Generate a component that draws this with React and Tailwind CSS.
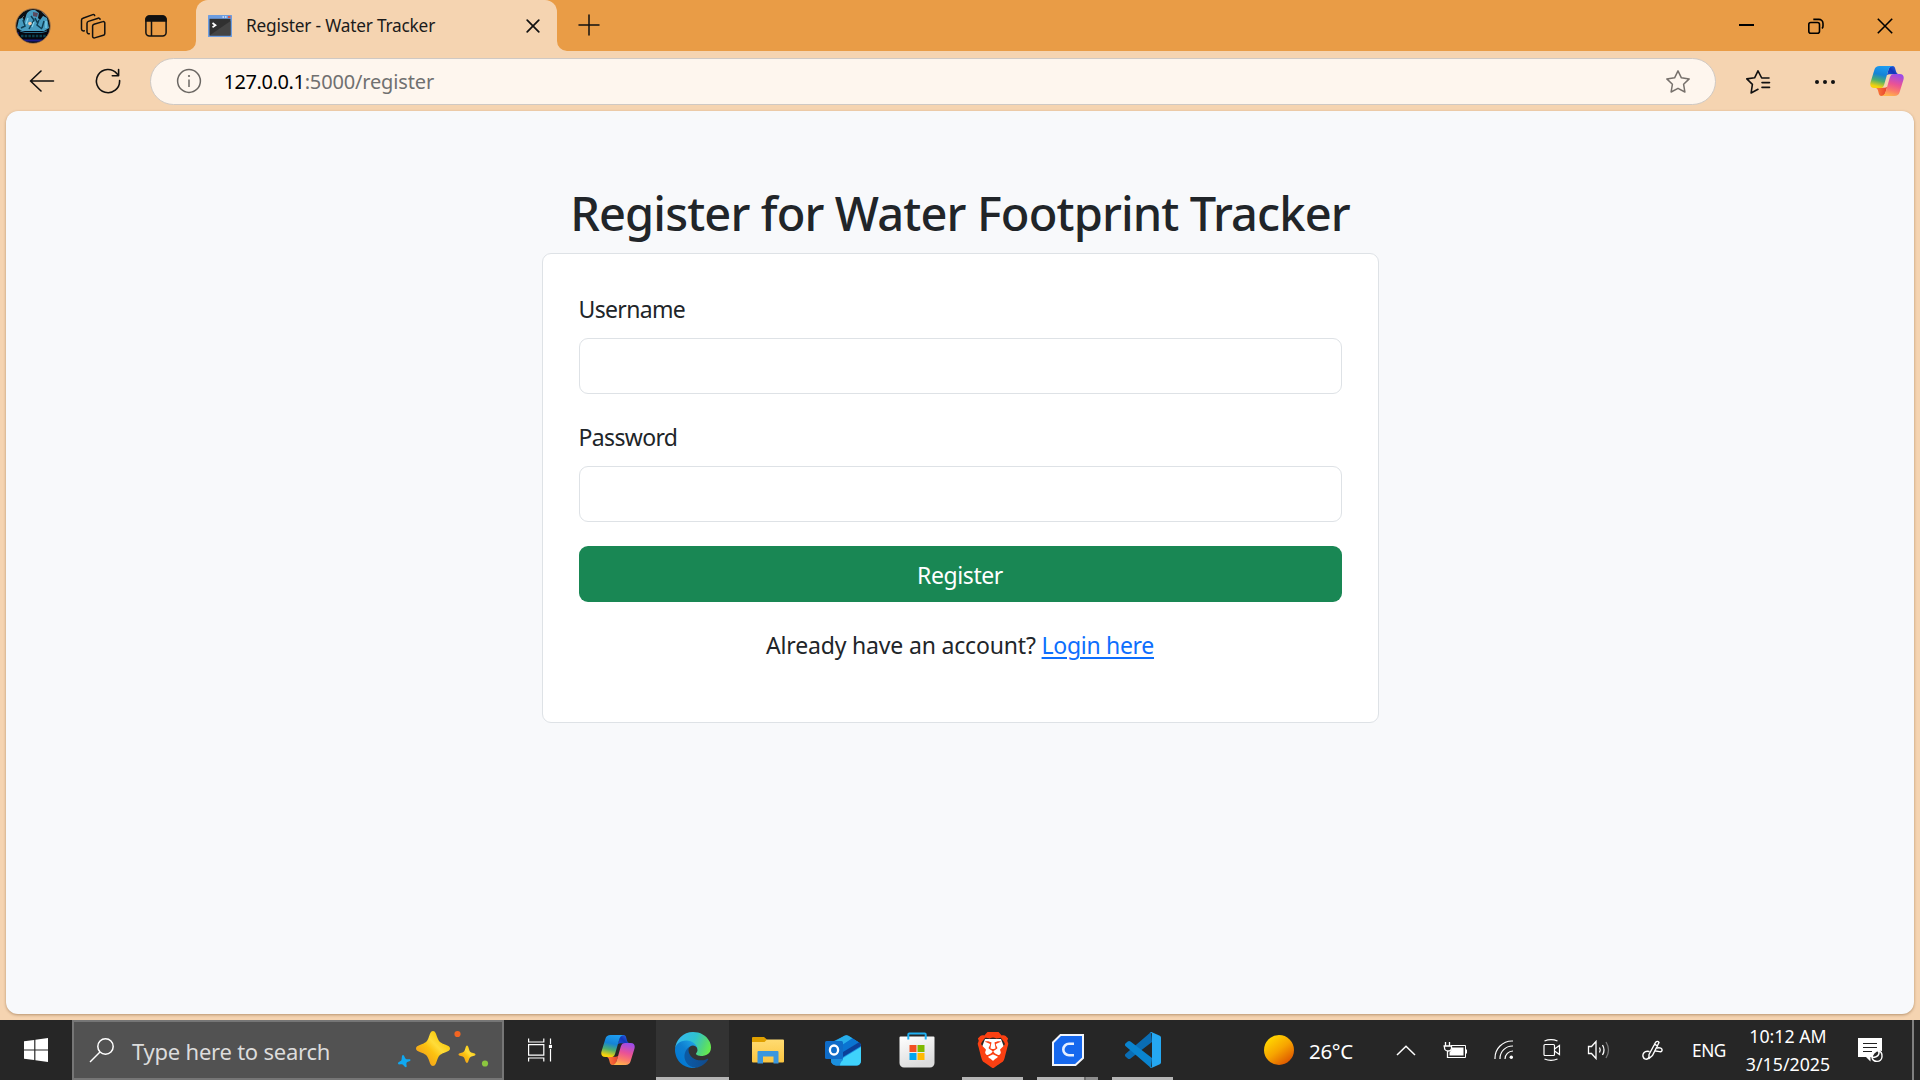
import React from "react";
import { SiBrave } from "react-icons/si";

function Copilot({ id, className }) {
  const ribbon =
    "M9.5 0H23.5C20.5 .2 19 1.8 18.2 4.6L14.2 18.4C13.4 21 12.2 22 9.8 22H4.2C1 22-.3 19.6.5 16.5L4.4 3.8C5.2 1.2 6.8 0 9.5 0Z";
  const fold = "M16.8 9.2L18.2 4.6C19 1.8 20 0 22.4 0C24.6 0 25 1.6 25.6 4C26.2 6.8 27.2 8.2 29.6 8.2H20.4C18.6 8.2 17.6 8.4 16.8 9.2Z";
  return (
    <svg width="34" height="30" viewBox="0 0 34 30" className={className}>
      <defs>
        <linearGradient id={id + "a"} x1="0.6" y1="0" x2="0.35" y2="1">
          <stop offset="0" stopColor="#1e9df1" />
          <stop offset="0.4" stopColor="#1583d6" />
          <stop offset="0.68" stopColor="#4fae6c" />
          <stop offset="0.95" stopColor="#f6d20c" />
        </linearGradient>
        <linearGradient id={id + "b"} x1="0.7" y1="0" x2="0.4" y2="1">
          <stop offset="0" stopColor="#9a4bea" />
          <stop offset="0.45" stopColor="#ea5296" />
          <stop offset="0.75" stopColor="#fb7c69" />
          <stop offset="1" stopColor="#ffb44c" />
        </linearGradient>
        <linearGradient id={id + "c"} x1="0" y1="1" x2="1" y2="0.3">
          <stop offset="0" stopColor="#1a50d8" />
          <stop offset="0.5" stopColor="#1236b8" />
          <stop offset="1" stopColor="#2c6bec" />
        </linearGradient>
        <linearGradient id={id + "d"} x1="0" y1="0" x2="1" y2="0">
          <stop offset="0" stopColor="#ff8a3c" />
          <stop offset="1" stopColor="#e8402f" />
        </linearGradient>
      </defs>
      <path d={fold} fill={`url(#${id}c)`} />
      <path d="M17.2 20.8L15.8 25.4C15 28.2 14 30 11.6 30C9.4 30 9 28.4 8.4 26C7.8 23.2 6.8 21.8 4.4 21.8H13.6C15.4 21.8 16.4 21.6 17.2 20.8Z" fill={`url(#${id}d)`} />
      <path d={ribbon} fill={`url(#${id}a)`} />
      <path d="M24.5 30H10.5C13.5 29.8 15 28.2 15.8 25.4L19.8 11.6C20.6 9 21.8 8 24.2 8H29.8C33 8 34.3 10.4 33.5 13.5L29.6 26.2C28.8 28.8 27.2 30 24.5 30Z" fill={`url(#${id}b)`} />
    </svg>
  );
}

function Edge() {
  return (
    <svg width="36" height="36" viewBox="0 0 256 256">
      <defs>
        <linearGradient id="e1" x1="0.2" y1="0.5" x2="1" y2="0.5">
          <stop offset="0" stopColor="#0c59a4" />
          <stop offset="1" stopColor="#114a8b" />
        </linearGradient>
        <linearGradient id="e2" x1="0.8" y1="0.2" x2="0.2" y2="0.9">
          <stop offset="0" stopColor="#1b9de2" />
          <stop offset="0.4" stopColor="#0f7fd0" />
          <stop offset="1" stopColor="#0078d4" />
        </linearGradient>
        <linearGradient id="e3" x1="0" y1="0.3" x2="1" y2="0.6">
          <stop offset="0" stopColor="#35b8f1" />
          <stop offset="0.5" stopColor="#2fc2cf" />
          <stop offset="0.8" stopColor="#52d67a" />
          <stop offset="1" stopColor="#66eb4e" />
        </linearGradient>
      </defs>
      <path fill="url(#e1)" d="M231 190.5c-3.4 1.8-6.9 3.4-10.5 4.7a101.6 101.6 0 0 1-35.9 6.4c-47.3 0-88.5-32.5-88.5-74.3 0-11.5 6.3-22 16.4-27.7-42.8 1.8-53.8 46.4-53.8 72.5 0 73.9 68.1 81.4 82.8 81.4 7.9 0 19.8-2.3 27-4.5l1.3-.4a128 128 0 0 0 66.6-52.8 4 4 0 0 0-5.4-5.3z" />
      <path fill="url(#e2)" d="M105.7 241.4A79.2 79.2 0 0 1 83 220.1a80.7 80.7 0 0 1 29.5-120.4c3.1-1.5 8.5-4.1 15.6-4a32.4 32.4 0 0 1 25.7 13 31.9 31.9 0 0 1 6.3 18.7c0-.2 24.5-79.6-80-79.6C36.2 47.7 0 89.5 0 126.2c-.2 19.4 4 38.7 12.1 56.2a128 128 0 0 0 156.4 67 75.6 75.6 0 0 1-62.8-8z" />
      <path fill="url(#e3)" d="M152.3 148.9c-.8 1-3.3 2.5-3.3 5.7 0 2.6 1.7 5.2 4.7 7.3 14.4 10 41.5 8.7 41.6 8.7 10.7 0 21.1-2.9 30.3-8.3A61.3 61.3 0 0 0 256 109.4c.3-22.4-8-37.3-11.3-43.9C223.5 23.9 177.7 0 128 0A128 128 0 0 0 0 126.2c.5-36.5 36.8-66 80-66 3.5 0 23.5.3 42 10.1 16.3 8.6 24.9 19 30.8 29.2 6.2 10.7 7.3 24.1 7.3 29.5s-2.7 13.3-7.8 19.9z" />
    </svg>
  );
}

function Explorer() {
  return (
    <svg width="32" height="27" viewBox="0 0 32 27">
      <defs>
        <linearGradient id="fx" x1="0" y1="0" x2="0" y2="1">
          <stop offset="0" stopColor="#ffdb72" />
          <stop offset="1" stopColor="#fbc540" />
        </linearGradient>
      </defs>
      <path d="M0 1a1 1 0 0 1 1-1H12l3 2.5V8H0Z" fill="#e0a000" />
      <path d="M0 5H12.5L15 2.5H31a1 1 0 0 1 1 1V24.5a1 1 0 0 1-1 1H1a1 1 0 0 1-1-1Z" fill="url(#fx)" />
      <path d="M5.5 26.5V15a1 1 0 0 1 1-1H25.5a1 1 0 0 1 1 1V26.5H21.5V19.5H11V26.5Z" fill="#3a96dd" />
    </svg>
  );
}

function Outlook() {
  return (
    <svg width="36" height="31" viewBox="0 0 36 31">
      <path d="M7 7L19.5.8a4 4 0 0 1 3.8 0L34 7.5a4 4 0 0 1 2 3.5V26a4.5 4.500 0 0 1-4.5 4.500H11A5 5 0 0 1 6 25.5V11Z" fill="#1a8fe0" />
      <path d="M8 7.5L19.5.8a4 4 0 0 1 3.8 0L27.5 3.300 16 11Z" fill="#28aeea" />
      <path d="M27.5 3.300L34 7.500 17 18.500V10Z" fill="#0a74d2" />
      <path d="M34 7.300a4 4 0 0 1 2 3.600L18 22V17Z" fill="#0b3f99" />
      <path d="M36 12V26a4.500 4.500 0 0 1-4.500 4.500H15C15 26 17 23.500 20 21.800Z" fill="#3fd2fb" />
      <path d="M6 23.500L18 19.500V25C16 26.500 15 28 15 30.500H11A5 5 0 0 1 6 25.500Z" fill="#1b8fdd" />
      <rect x="0" y="6" width="18" height="18" rx="1.5" fill="#0f6cc8" />
      <ellipse cx="9" cy="15" rx="4.1" ry="4.5" fill="none" stroke="#fff" strokeWidth="2.300" />
    </svg>
  );
}

function Store() {
  return (
    <svg width="36" height="36" viewBox="0 0 36 36" className="-ml-px">
      <defs>
        <linearGradient id="st" x1="0" y1="0" x2="0.4" y2="1">
          <stop offset="0" stopColor="#fff" />
          <stop offset="1" stopColor="#dcdcdc" />
        </linearGradient>
      </defs>
      <path d="M.5 5.500a1 1 0 0 1 1-1H34.500a1 1 0 0 1 1 1V31a4.500 4.500 0 0 1-4.500 4.500H5A4.500 4.500 0 0 1 .5 31Z" fill="url(#st)" />
      <path d="M9.300 7.500V2.500a1 1 0 0 1 1-1H25.700a1 1 0 0 1 1 1V7.500" fill="none" stroke="#1fb0f2" strokeWidth="2" />
      <path d="M10.500 13H17.500V20H10.500Z" fill="#f25022" />
      <path d="M18.500 13H25.500V20H18.500Z" fill="#7fba00" />
      <path d="M10.500 21H17.500V28H10.500Z" fill="#00a4ef" />
      <path d="M18.500 21H25.500V28H18.500Z" fill="#ffb900" />
    </svg>
  );
}

function BraveIcon() {
  return (
    <span className="relative flex h-9 w-9 items-center justify-center">
      <svg width="36" height="36" viewBox="0 0 36 36" className="absolute inset-0">
        <path d="M10 7H26L29 15 25 24 18 31 11 24 7 15Z" fill="#fff" />
      </svg>
      <SiBrave className="relative h-9 w-9 text-[#fb4012]" />
    </span>
  );
}

function CubeApp() {
  return (
    <svg width="32" height="32" viewBox="0 0 32 32">
      <path d="M8.500 1H31V24L23.500 31H1V8.500Z" fill="#1668ee" stroke="#f2f5fb" strokeWidth="2" />
      <path d="M22 9.800H17A5.700 5.700 0 0 0 17 21.200H22" fill="none" stroke="#e6efff" strokeWidth="2.600" />
    </svg>
  );
}

function VsCode() {
  return (
    <svg width="36" height="36" viewBox="0 0 36 36">
      <path d="M26 0L27 10 5.500 26.500a2.200 2.200 0 0 1-2.800 0L.7 24.700a2 2 0 0 1 0-2.900Z" fill="#0a6db4" />
      <path d="M26 36L27 26 5.500 9.500a2.200 2.200 0 0 0-2.800 0L.7 11.300a2 2 0 0 0 0 2.900Z" fill="#0a84cf" />
      <path d="M27 0.200L34.800 3.800A2 2 0 0 1 36 5.700V30.300A2 2 0 0 1 34.800 32.200L27 35.800C25.800 36.200 25 35.800 24.500 35.200 26 36 27 35 27 33.700V2.300C27 1 26 0 24.500.8 25.100.1 26 0 27 .2Z" fill="#25a8f2" />
    </svg>
  );
}

function TaskItem({ children, active, bar }) {
  return (
    <div className={active ? "mr-0.5 flex h-full w-[73px] flex-col bg-[#333333]" : "mr-0.5 flex h-full w-[73px] flex-col"}>
      <div className="flex h-[57px] items-center justify-center pt-[3px]">{children}</div>
      {active && <div className="h-[3px] bg-[#b5b5b5]" />}
      {bar === "one" && <div className="mx-auto h-[3px] w-[61px] bg-[#b5b5b5]" />}
      {bar === "two" && (
        <div className="mx-auto flex h-[3px] w-[61px]">
          <div className="w-[47px] bg-[#b5b5b5]" />
          <div className="w-0.5 bg-[#6d6d6d]" />
          <div className="w-3 bg-[#8d8d8d]" />
        </div>
      )}
    </div>
  );
}

function TabStrip() {
  return (
    <div className="flex h-[51px] items-center bg-[#e99c46]">
      <div className="flex w-[66px] justify-center">
        <svg width="36" height="36" viewBox="0 0 36 36">
          <defs>
            <clipPath id="av"><circle cx="18" cy="18" r="17" /></clipPath>
          </defs>
          <g clipPath="url(#av)">
            <rect width="36" height="36" fill="#0b1016" />
            <path d="M3 7L8 3M5 12L9 8M27 4L32 9M28 8L33 15" stroke="#56606a" strokeWidth="1" />
            <path d="M11 8C12 3 16 1.500 20 2L24 5 23 10 25 12 28 8 32 10 34 20 29 23H7L2 20 4 11 8 10 9 14Z" fill="#489cc0" />
            <path d="M18 4L23 5 22 9 18 8Z" fill="#5b4a5e" />
            <path d="M16 8L19 12 14 21M24 12L22 17 27 21M8 12L10 18 6 20M29 13L27 20M20 10L23 16" stroke="#0f3f56" strokeWidth="1.500" fill="none" />
            <path d="M13 10L11 16M31 13V20M19 14L17 19" stroke="#7ed4f0" strokeWidth="1.300" />
            <circle cx="15" cy="15.500" r="1.800" fill="#f0c9ae" />
            <path d="M0 23H36V36H0Z" fill="#05070f" />
            <path d="M5 23L10 24.500H27L32 23" stroke="#2c6f8e" fill="none" />
            <path d="M6 28H31" stroke="#0a3f4d" strokeWidth="2.500" strokeDasharray="2.500 1.200" />
            <path d="M3 24V32H34V24M8 33H28" stroke="#1d1e86" fill="none" strokeWidth="1.200" />
          </g>
          <circle cx="18" cy="18" r="17.300" fill="none" stroke="#85664a" strokeWidth="0.800" />
        </svg>
      </div>
      <div className="flex w-[54px] justify-center">
        <svg width="26" height="26" viewBox="0 0 26 26" fill="none" stroke="#111" strokeWidth="1.500" strokeLinecap="round" strokeLinejoin="round">
          <path d="M14 11.200L22.800 8.600a1.500 1.500 0 0 1 2 1.400V20.400a2 2 0 0 1-1.400 1.900L14.600 24.900a1.500 1.500 0 0 1-2-1.400V13.100a2 2 0 0 1 1.400-1.900Z" />
          <path d="M9.300 20.800A2 2 0 0 1 7 19V10.300A2 2 0 0 1 8.400 8.400L18.200 5.200a1.500 1.500 0 0 1 1.900 1" />
          <path d="M4.300 17.800A2 2 0 0 1 1.500 16V7.300A2 2 0 0 1 2.900 5.300L12.800 1.600a1.500 1.500 0 0 1 1.900 1" />
        </svg>
      </div>
      <div className="flex w-[67px] pl-[25px]">
        <svg width="22" height="22" viewBox="0 0 22 22" fill="none" stroke="#111" strokeWidth="1.500">
          <rect x="0.900" y="0.900" width="20.200" height="20.200" rx="3.500" />
          <path d="M1 6V4.500A3.500 3.500 0 0 1 4.500 1H17.500A3.500 3.500 0 0 1 21 4.500V6Z" fill="#111" />
          <path d="M6.500 6V21" />
        </svg>
      </div>
      <svg width="10" height="10" viewBox="0 0 10 10" className="-ml-px self-end"><path d="M10 0V10H0A10 10 0 0 0 10 0Z" fill="#f5d4b1" /></svg>
      <div className="flex h-full w-[361px] items-center rounded-t-xl bg-[#f5d4b1] pl-3 pr-[17px]">
        <svg width="24" height="22" viewBox="0 0 24 22">
          <rect x="0" y="0" width="24" height="22" rx="0.500" fill="#6d9de0" />
          <rect x="1.500" y="3.800" width="21" height="16.700" fill="#303030" />
          <path d="M1.500 20.500L22.500 6V20.500Z" fill="#444" />
          <path d="M14.500 2H16M17 2H18.500" stroke="#d6e5fa" strokeWidth="1.400" />
          <path d="M20 2H22.500" stroke="#e0523a" strokeWidth="1.800" />
          <path d="M4.500 8L7.500 10.300 4.500 12.200" stroke="#fff" strokeWidth="1.700" fill="none" />
        </svg>
        <span className="ml-3.5 grow whitespace-nowrap text-[17.25px] tracking-[-0.2px] text-[#1b1b1b]">Register - Water Tracker</span>
        <svg width="14" height="14" viewBox="0 0 14 14" stroke="#111" strokeWidth="1.700" strokeLinecap="round"><path d="M1.200 1.200L12.800 12.800M12.800 1.200L1.200 12.800" /></svg>
      </div>
      <svg width="10" height="10" viewBox="0 0 10 10" className="self-end"><path d="M0 0V10H10A10 10 0 0 1 0 0Z" fill="#f5d4b1" /></svg>
      <svg width="22" height="22" viewBox="0 0 22 22" stroke="#111" strokeWidth="1.500" strokeLinecap="round" className="mb-0.5 ml-[11px]"><path d="M11 1V21M1 11H21" /></svg>
      <div className="ml-auto mr-px flex items-center">
        <div className="flex w-[69px] justify-center"><div className="mb-px h-0.5 w-[15px] bg-black" /></div>
        <div className="flex w-[69px] justify-center">
          <svg width="16" height="16" viewBox="0 0 16 16" fill="none" stroke="#000" strokeWidth="1.600">
            <rect x="0.800" y="4.500" width="10.700" height="10.700" rx="2" />
            <path d="M5.300 1.400H10.800A4.200 4.200 0 0 1 15 5.600V8A3.500 3.500 0 0 1 14 10.500" />
          </svg>
        </div>
        <div className="flex w-[69px] justify-center">
          <svg width="16" height="16" viewBox="0 0 16 16" stroke="#000" strokeWidth="1.600"><path d="M.8.8L15.200 15.200M15.200.8L.8 15.200" /></svg>
        </div>
      </div>
    </div>
  );
}

function Toolbar() {
  return (
    <div className="flex h-[60px] items-center bg-[#f5d4b1]">
      <svg width="26" height="22" viewBox="0 0 26 22" fill="none" stroke="#111" strokeWidth="1.600" strokeLinecap="round" strokeLinejoin="round" className="mb-px ml-[29px]"><path d="M24.500 11H1.500M12 1L1.500 11 12 21" /></svg>
      <svg width="26" height="26" viewBox="0 0 26 26" fill="none" stroke="#111" strokeWidth="1.600" strokeLinecap="round" strokeLinejoin="round" className="ml-10">
        <path d="M24.600 12.500A11.600 11.600 0 1 1 22 5.700L23.500 7.400M23.600 1.500V7.800H17.300" />
      </svg>
      <div className="ml-[29px] flex h-[47px] w-[1566px] items-center rounded-full border border-[#cfc9c4] bg-[#fef6ee] pl-[25px] pr-6">
        <svg width="26" height="26" viewBox="0 0 26 26" fill="none" stroke="#6b6763" strokeWidth="1.500">
          <circle cx="13" cy="13" r="11.400" />
          <path d="M13 11.500V19" />
          <circle cx="13" cy="8" r="1.100" fill="#6b6763" stroke="none" />
        </svg>
        <span className="ml-[21.5px] mt-px whitespace-nowrap text-[20px] text-[#707070]">
          <span className="tracking-[-0.4px] text-black">127.0.0.1</span>
          <span className="tracking-[-0.15px]">:5000/register</span>
        </span>
        <svg width="26" height="26" viewBox="0 0 26 26" fill="none" stroke="#77716c" strokeWidth="1.500" strokeLinejoin="round" className="ml-auto mt-px">
          <path d="M13 1.800L16.400 8.800 24.200 9.900 18.600 15.300 19.900 23 13 19.300 6.100 23 7.400 15.300 1.800 9.900 9.600 8.800Z" />
        </svg>
      </div>
      <svg width="26" height="26" viewBox="0 0 26 26" fill="none" stroke="#111" strokeWidth="1.600" strokeLinecap="round" strokeLinejoin="round" className="ml-[29px] mt-px">
        <path d="M24 9H16.700L13 1.800 9.600 8.800 1.800 9.900 7.400 15.300 6.100 24 13 20.300M17 13.600H24.500M17 18.400H24.500" />
      </svg>
      <svg width="22" height="6" viewBox="0 0 22 6" className="ml-[43px] mt-px"><circle cx="3" cy="3" r="2" fill="#111" /><circle cx="11" cy="3" r="2" fill="#111" /><circle cx="19" cy="3" r="2" fill="#111" /></svg>
      <Copilot id="tb" className="ml-[34px]" />
    </div>
  );
}

function Page() {
  return (
    <div className="flex h-[909px] bg-[#f5d4b1] px-1.5 pb-1.5">
      <main className="flex grow flex-col items-center rounded-xl bg-[#f8f9fb] pt-[72px] text-[#212529] shadow-[0_1px_3px_rgba(90,50,10,0.4)]">
        <h1 className="mb-3 h-[58px] whitespace-nowrap text-[47px] font-medium leading-[60px] tracking-[-0.87px]">Register for Water Footprint Tracker</h1>
        <form className="flex h-[470px] w-[837px] flex-col rounded-[9px] border border-[#dee2e6] bg-white px-9 pt-9 text-[23px]">
          <label className="mb-3 h-9 leading-[38px] tracking-[-0.65px]">Username</label>
          <input className="mb-6 h-14 rounded-[9px] border border-[#dee2e6]" />
          <label className="mb-3 h-9 leading-[38px] tracking-[-0.65px]">Password</label>
          <input type="password" className="mb-6 h-14 rounded-[9px] border border-[#dee2e6]" />
          <button type="button" className="h-14 rounded-[9px] bg-[#198754] pt-0.5 tracking-[-0.4px] text-white">Register</button>
          <p className="mt-6 h-9 text-center leading-[38px] tracking-[-0.17px]">
            Already have an account? <a className="tracking-[-0.3px] text-[#0d6efd] underline decoration-[1.5px] underline-offset-[3px]">Login here</a>
          </p>
        </form>
      </main>
    </div>
  );
}

function SearchBox() {
  return (
    <div className="flex h-[60px] w-[432px] items-center border-2 border-[#767676] bg-[#525252] pl-[15px]">
      <svg width="26" height="26" viewBox="0 0 26 26" fill="none" stroke="#fff" strokeWidth="1.500"><circle cx="16.500" cy="9.500" r="7.700" /><path d="M11 15L1 25" /></svg>
      <span className="ml-[17px] mt-0.5 whitespace-nowrap text-[22px] tracking-[-0.23px] text-[#dcdcdc]">Type here to search</span>
      <svg width="92" height="38" viewBox="0 0 92 38" className="mb-0.5 ml-auto mr-[13px]">
        <defs>
          <linearGradient id="gs" x1="0.8" y1="0.2" x2="0.2" y2="0.8">
            <stop offset="0" stopColor="#f7c80a" />
            <stop offset="0.35" stopColor="#ffdc3a" />
            <stop offset="0.6" stopColor="#fcc20f" />
            <stop offset="1" stopColor="#f3a31c" />
          </linearGradient>
        </defs>
        <path d="M36 1C38.500 1 39 4 40.500 8 42 12 44 13 48 14.500 51.500 16 53 16.500 53 18.500S51.500 21 48 22.500C44 24 42 25 40.500 29 39 33 38.500 36 36 36S33 33 31.500 29C30 25 28 24 24 22.500 20.500 21 19 20.500 19 18.500S20.500 16 24 14.500C28 13 30 12 31.500 8 33 4 33.500 1 36 1Z" fill="url(#gs)" />
        <path d="M70 15.500C71.500 15.500 72 20 73 21.500S78.500 23 78.500 24.500 74.500 26 73 27.500 71.500 33 70 33 68 29 67 27.500 61.500 26 61.500 24.500 65.500 23 67 21.500 68.500 15.500 70 15.500Z" fill="url(#gs)" />
        <path d="M6 25C7.500 25 7.500 28 9 29S13.500 28.500 13.500 30 10 31.500 9.500 33 10.500 37 9 37.300 6.500 34.500 5 34.300 1.500 35 1 33.500 4 31.500 4.500 30 4.500 25 6 25Z" fill="#10a8f0" />
        <circle cx="60.500" cy="4" r="3.100" fill="#f26522" />
        <circle cx="88" cy="33.500" r="3.100" fill="#8cc63f" />
      </svg>
    </div>
  );
}

function Tray() {
  return (
    <div className="ml-auto flex h-full items-center text-white">
      <svg width="30" height="30" viewBox="0 0 30 30">
        <defs><linearGradient id="sun" x1="0.2" y1="0.1" x2="0.8" y2="0.9"><stop offset="0" stopColor="#ffd500" /><stop offset="0.5" stopColor="#f7a400" /><stop offset="1" stopColor="#df5a00" /></linearGradient></defs>
        <circle cx="15" cy="15" r="15" fill="url(#sun)" />
      </svg>
      <span className="ml-[15px] mt-0.5 w-[72px] whitespace-nowrap text-[20.5px] tracking-[-0.3px]">26°C</span>
      <div className="flex w-[50px] justify-center">
        <svg width="20" height="11" viewBox="0 0 20 11" fill="none" stroke="#fff" strokeWidth="1.500"><path d="M1 10L10 1.200 19 10" /></svg>
      </div>
      <div className="flex w-[47px] justify-center">
        <svg width="24" height="18" viewBox="0 0 24 18" fill="none" stroke="#fff" strokeWidth="1">
          <path d="M8 4.500H22.500V16.500H4.500V11M23.500 8.500V12.500" />
          <path d="M9 6.500H20.500V14.500H6.500V11.500Q9 9 9 6.500Z" fill="#fff" stroke="none" />
          <path d="M2.500 1V5M6.500 1V5M.5 5H8.500V7A3.500 3 0 0 1 1.500 7V5M4.500 10V17" strokeWidth="1.300" />
        </svg>
      </div>
      <div className="flex w-[51px] justify-center pl-px">
        <svg width="20" height="20" viewBox="0 0 20 20" fill="none" stroke="#fff" strokeWidth="1.200">
          <path d="M1 19V18A17 17 0 0 1 18 1H19M6 19V18.500A12.500 12.500 0 0 1 18.500 6H19M11 19A8 8 0 0 1 19 11" />
          <circle cx="17.300" cy="17.300" r="1.700" fill="#fff" stroke="none" />
        </svg>
      </div>
      <div className="flex w-[46px] justify-center">
        <svg width="18" height="24" viewBox="0 0 18 24" fill="none" stroke="#fff" strokeWidth="1.200">
          <rect x="1" y="6.500" width="10.500" height="11" rx="1" />
          <path d="M11.500 11L16.500 7.500V16.500L11.500 13M1.500 3Q8 .2 14.500 3M1.500 21Q8 23.800 14.500 21" />
        </svg>
      </div>
      <div className="flex w-[48px] justify-center">
        <svg width="24" height="20" viewBox="0 0 24 20" fill="none" stroke="#fff" strokeWidth="1.300">
          <path d="M1.500 6.500H4.500L9 1.500V18.500L4.500 13.500H1.500Z" />
          <path d="M12.500 7.500Q14 10 12.500 12.500M15.500 5Q18.500 10 15.500 15" />
          <path d="M19 2Q24 10 19 18" stroke="#777" />
        </svg>
      </div>
      <div className="flex w-[59px] justify-center">
        <svg width="21" height="21" viewBox="0 0 21 21" fill="none" stroke="#fff" strokeWidth="1.400" strokeLinejoin="round" strokeLinecap="round">
          <path d="M7 14.500L13.500 2.500Q15.500 .3 17 2.500L10.500 15.500 7 18.500ZM12.500 4L15.500 6" />
          <path d="M7 11.500C2 10.500.5 14 1 16.500S5 20.500 7 17.500M15 8C18 7.500 20.500 8 20 10.500S16 11 13.500 11" />
        </svg>
      </div>
      <span className="mt-px w-[54px] text-center text-[17.25px] tracking-[-0.4px]">ENG</span>
      <div className="mb-px flex w-[104px] flex-col items-center whitespace-nowrap text-[17.75px] leading-[28px]">
        <span>10:12 AM</span>
        <span>3/15/2025</span>
      </div>
      <svg width="26" height="26" viewBox="0 0 26 26" className="ml-[18px]">
        <path d="M0 1H24V14A8 8 0 0 0 15 19V20H12.500V24.500L8 20H0Z" fill="#fff" />
        <path d="M5 6.500H19M5 10.500H19M5 14.500H14" stroke="#222" strokeWidth="1.200" />
        <path d="M19.500 13.500C22 15 22 20 14 20.500C15 25.500 23 26 24 20C24.300 17 23 14 19.500 13.500Z" fill="#262626" stroke="#fff" strokeWidth="1.400" />
      </svg>
      <div className="ml-7 h-full w-0.5 bg-[#7f7f7f]" />
      <div className="w-1.5" />
    </div>
  );
}

function Taskbar() {
  return (
    <div className="flex h-[60px] items-center bg-[#262626]">
      <div className="flex w-[72px] justify-center">
        <svg width="24" height="24" viewBox="0 0 24 24" fill="#fff"><path d="M0 3.200L10.200 1.900V11.400H0ZM11.400 1.700L24 0V11.400H11.400ZM0 12.500H10.200V22.100L0 20.800ZM11.400 12.500H24V24L11.400 22.300Z" /></svg>
      </div>
      <SearchBox />
      <div className="flex w-[77px] items-center justify-center pr-[5px]">
        <svg width="24" height="24" viewBox="0 0 24 24" fill="none" stroke="#fff" strokeWidth="1.200">
          <path d="M.6 .5V4H15.800V.5M.6 6.700H15.800V17.200H.6ZM.6 23.500V20H15.800V23.500M22.500.5V23.500" />
          <rect x="20.500" y="6.500" width="4" height="4" fill="#fff" stroke="#262626" strokeWidth="0.800" />
        </svg>
      </div>
      <TaskItem><Copilot id="tk" /></TaskItem>
      <TaskItem active><Edge /></TaskItem>
      <TaskItem><Explorer /></TaskItem>
      <TaskItem><Outlook /></TaskItem>
      <TaskItem><Store /></TaskItem>
      <TaskItem bar="one"><BraveIcon /></TaskItem>
      <TaskItem bar="two"><CubeApp /></TaskItem>
      <TaskItem bar="one"><VsCode /></TaskItem>
      <Tray />
    </div>
  );
}

export default function App() {
  return (
    <div className="flex h-[1080px] w-[1920px] flex-col overflow-hidden font-['Noto_Sans','Open_Sans',sans-serif]">
      <TabStrip />
      <Toolbar />
      <Page />
      <Taskbar />
    </div>
  );
}
